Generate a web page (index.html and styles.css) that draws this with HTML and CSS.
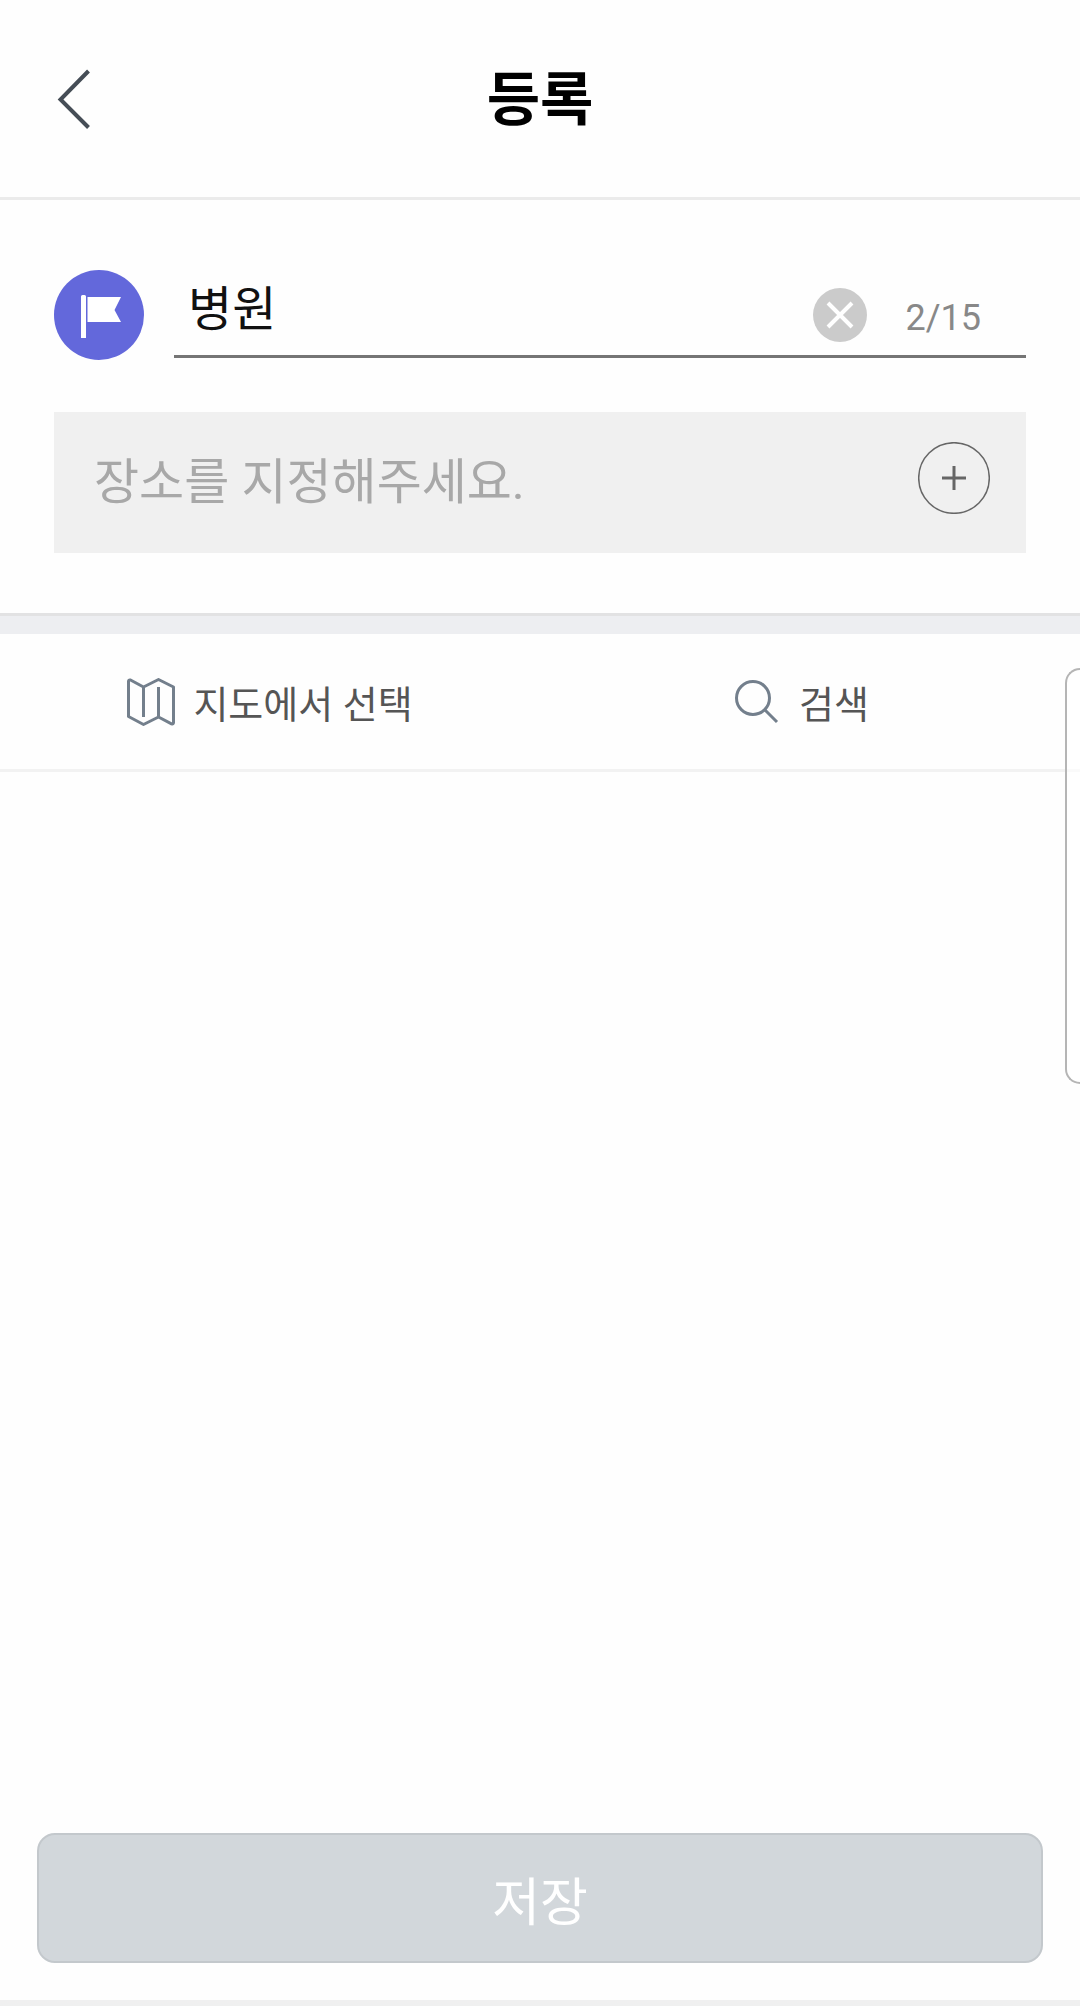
FILE: index.html
```html
<!DOCTYPE html>
<html lang="ko">
<head>
  <meta charset="utf-8">
  <meta name="viewport" content="width=device-width, initial-scale=1">
  <title>등록</title>
  <link rel="stylesheet" href="styles.css">
</head>
<body>
  <form class="page">
    <header class="header">
      <button class="icon-button back" type="button" aria-label="뒤로">
        <svg width="36" height="60" viewBox="0 0 36 60" fill="none" stroke="#454d56" stroke-width="4"><path d="M34.500 2 6.500 30.500l28 28"/></svg>
      </button>
      <h1 class="title">등록</h1>
    </header>

    <section class="details">
      <div class="name-row">
        <svg class="flag" width="90" height="90" viewBox="0 0 90 90">
          <circle cx="45" cy="45" r="45" fill="#6368db"/>
          <path fill="#fff" d="M27 26.500a1.500 1.500 0 0 1 1.500-1.500h2a1.500 1.500 0 0 1 1.500 1.500V68h-5zM33.500 27H67l-6.500 13L67 52H33.500z"/>
        </svg>
        <div class="name-field">
          <input class="name-input" type="text" value="병원" maxlength="15" aria-label="이름">
          <button class="icon-button" type="button" aria-label="지우기">
            <svg width="54" height="54" viewBox="0 0 54 54"><circle cx="27" cy="27" r="27" fill="#cbcbcb"/><path stroke="#fff" stroke-width="4" d="m15 15 24 24M39 15 15 39"/></svg>
          </button>
          <span class="counter">2/15</span>
        </div>
      </div>
      <div class="place-field">
        <input class="place-input" type="text" placeholder="장소를 지정해주세요." readonly aria-label="장소">
        <button class="icon-button" type="button" aria-label="장소 추가">
          <svg width="72" height="72" viewBox="0 0 72 72" fill="none" stroke="#666"><circle cx="36" cy="36" r="35.300" stroke-width="1.500"/><path stroke-width="3" d="M24 36h24M36 24v24"/></svg>
        </button>
      </div>
    </section>

    <nav class="modes">
      <button class="mode" type="button">
        <svg width="48" height="48" viewBox="0 0 48 48" fill="none" stroke="#737f8c" stroke-width="3" stroke-linejoin="round"><path d="M3.500 2 16.500 9 31.500 1.500 46.500 9V44.500q0 2-2 1.300L31.500 39 16.500 46.500 1.500 38.500V3.500q0-2 2-1.500zM16.500 9v30M31.500 9v30"/></svg>
        지도에서 선택
      </button>
      <button class="mode search" type="button">
        <svg width="48" height="48" viewBox="0 0 48 48" fill="none" stroke="#737f8c" stroke-width="3"><circle cx="20" cy="20" r="16.500"/><path d="m32 32 12 12"/></svg>
        검색
      </button>
    </nav>

    <main class="results"></main>

    <footer class="footer">
      <button class="save" type="submit" disabled>저장</button>
    </footer>
    <aside class="edge-handle"></aside>
  </form>
</body>
</html>
```

FILE: styles.css
```css
* {
  box-sizing: border-box;
}

body {
  margin: 0;
  background: #fefefe;
  color: #111;
  font-family: Roboto, "Noto Sans CJK KR", sans-serif;
}

button,
input {
  margin: 0;
  padding: 0;
  border: 0;
  background: none;
  color: inherit;
  font: inherit;
}

svg {
  display: block;
  flex: none;
}

.page {
  position: relative;
  display: flex;
  flex-direction: column;
  min-height: 100vh;
  overflow: hidden;
}

.icon-button {
  flex: none;
}

.header {
  display: grid;
  grid-template-columns: 1fr auto 1fr;
  align-items: center;
  height: 200px;
  padding: 0 54px;
  border-bottom: 3px solid #ebebeb;
}

.back {
  justify-self: start;
}

.title {
  margin: 0;
  padding-top: 2px;
  color: #000;
  font-size: 58px;
  font-weight: 700;
  line-height: 80px;
}

.details {
  display: flex;
  flex-direction: column;
  gap: 52px;
  padding: 70px 54px 60px;
  border-bottom: 3px solid #e2e2e3;
}

.name-row {
  display: flex;
  gap: 30px;
}

.name-field {
  display: flex;
  flex: 1;
  align-items: center;
  height: 88px;
  padding: 4px 45px 0 14px;
  border-bottom: 3px solid #757575;
}

.name-input {
  flex: 1;
  min-width: 0;
  height: 80px;
  padding-bottom: 20px;
  font-size: 48px;
}

.counter {
  margin-left: 38px;
  padding-top: 6px;
  color: #888;
  font-size: 36px;
  line-height: 42px;
}

.place-field {
  display: flex;
  align-items: center;
  height: 141px;
  padding: 0 36px 10px 40px;
  background: #f0f0f0;
}

.place-input {
  flex: 1;
  min-width: 0;
  height: 80px;
  padding-top: 10px;
  font-size: 49px;
}

.place-input::placeholder {
  color: #a8a8a8;
  opacity: 1;
}

.modes {
  display: grid;
  grid-template-columns: 1fr 1fr;
  border-top: 18px solid #edeef1;
  border-bottom: 3px solid #f2f2f2;
}

.mode {
  display: flex;
  align-items: center;
  justify-content: center;
  gap: 18px;
  height: 135px;
  color: #555;
  font-size: 38px;
}

.search {
  padding-right: 18px;
}

.results {
  flex: 1;
}

.footer {
  padding: 0 37px 37px;
  border-bottom: 6px solid #f0f0f0;
}

.save {
  width: 100%;
  height: 130px;
  border: 2px solid #c3c8cc;
  border-radius: 18px;
  background: #d2d7db;
  color: #fff;
  font-size: 52px;
}

.edge-handle {
  position: absolute;
  top: 668px;
  right: 0;
  width: 15px;
  height: 416px;
  border: 2px solid #b5b5b5;
  border-right: 0;
  border-radius: 18px 0 0 18px;
  background: rgb(255 255 255 / 60%);
}
```
